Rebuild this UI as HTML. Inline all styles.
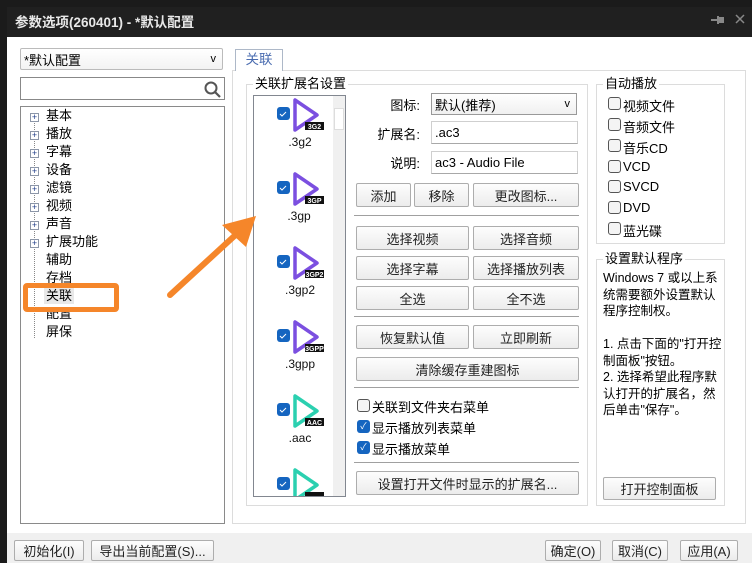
<!DOCTYPE html><html><head><meta charset="utf-8"><style>
*{box-sizing:border-box;margin:0;padding:0}
body{width:752px;height:563px;background:#1b1b1b;position:relative;overflow:hidden;font-family:"Liberation Sans","Noto Sans CJK SC",sans-serif;font-size:13px;color:#000}
.a{position:absolute}
.btn{position:absolute;background:linear-gradient(#fdfdfd,#ececec);border:1px solid #adadad;border-radius:2px;text-align:center;font-size:13px;color:#222;display:flex;align-items:center;justify-content:center}
.inp{position:absolute;background:#fff;border:1px solid #cfcfcf;border-bottom-color:#a8a8a8;padding-left:3px;display:flex;align-items:center}
.cb{position:absolute;width:13px;height:13px;border:1px solid #555;border-radius:3px;background:#f4f4f4}
.cbc{position:absolute;width:13px;height:13px;border-radius:3px;background:#1565c0;color:#fff;font-size:9px;line-height:13px;text-align:center}
.sep{position:absolute;height:1px;background:#a0a0a0;left:349px;width:230px}
.grp{position:absolute;border:1px solid #dcdcdc}
.gt{position:absolute;background:#fff;padding:0 2px;font-size:13px;line-height:15px}
.tr{position:absolute;left:46px;font-size:13px;line-height:16px}
.pl{position:absolute;left:30px;width:9px;height:9px;border:1px solid #8c96a8;background:#fff;font-size:9px;line-height:7px;text-align:center;color:#1f3c88}
</style></head><body>
<div class="a" style="left:7px;top:7px;width:745px;height:30px;background:#202020"></div>
<div class="a" style="left:15px;top:11px;color:#e8e8e8;font-weight:bold;font-size:13.5px">参数选项(260401) - *默认配置</div>
<svg class="a" style="left:711px;top:15px" width="14" height="10"><rect x="0" y="4" width="6" height="2" fill="#888"/><rect x="6" y="1" width="2" height="8" fill="#888"/><rect x="8" y="2" width="5" height="6" fill="#888"/></svg>
<svg class="a" style="left:735px;top:14px" width="10" height="10"><path d="M1 1L9 9M9 1L1 9" stroke="#888" stroke-width="1.5"/></svg>
<div class="a" style="left:7px;top:37px;width:745px;height:496px;background:#fff"></div>
<div class="a" style="left:7px;top:533px;width:745px;height:30px;background:#f0f0f0"></div>

<div class="inp" style="left:20px;top:48px;width:203px;height:22px;border-radius:2px;border-color:#bbb;background:linear-gradient(#fff,#f3f3f3)">*默认配置<span style="position:absolute;right:6px;font-size:11px">v</span></div>
<div class="inp" style="left:20px;top:77px;width:205px;height:23px;border-color:#888">
<svg class="a" style="right:3px;top:3px" width="17" height="17"><circle cx="7" cy="7" r="5.5" fill="none" stroke="#555" stroke-width="2"/><line x1="11" y1="11" x2="16" y2="16" stroke="#555" stroke-width="2.2"/></svg></div>
<div class="a" style="left:20px;top:106px;width:205px;height:418px;border:1px solid #8a8a8a;background:#fff"></div>
<div class="a" style="left:34px;top:118px;height:220px;border-left:1px dotted #888"></div>
<div class="pl" style="top:113px">+</div><div class="tr" style="top:108px">基本</div>
<div class="pl" style="top:131px">+</div><div class="tr" style="top:126px">播放</div>
<div class="pl" style="top:149px">+</div><div class="tr" style="top:144px">字幕</div>
<div class="pl" style="top:167px">+</div><div class="tr" style="top:162px">设备</div>
<div class="pl" style="top:185px">+</div><div class="tr" style="top:180px">滤镜</div>
<div class="pl" style="top:203px">+</div><div class="tr" style="top:198px">视频</div>
<div class="pl" style="top:221px">+</div><div class="tr" style="top:216px">声音</div>
<div class="pl" style="top:239px">+</div><div class="tr" style="top:234px">扩展功能</div>
<div class="tr" style="top:252px">辅助</div>
<div class="tr" style="top:270px">存档</div>
<div class="tr" style="top:288px;background:#e8e8e8;padding:0 2px;left:44px">关联</div>
<div class="tr" style="top:306px">配置</div>
<div class="tr" style="top:324px">屏保</div>

<div class="a" style="left:232px;top:70px;width:514px;height:454px;border:1px solid #dcdcdc"></div>
<div class="a" style="left:235px;top:49px;width:48px;height:22px;border:1px solid #adb8c8;border-bottom:none;background:#fff;color:#4a6cb0;text-align:center;line-height:20px;font-size:13.5px">关联</div>

<div class="grp" style="left:246px;top:84px;width:342px;height:422px"></div>
<div class="gt" style="left:253px;top:76px">关联扩展名设置</div>
<div class="a" style="left:253px;top:95px;width:93px;height:402px;border:1px solid #828790;background:#fff;overflow:hidden">
<div class="a" style="left:79px;top:0;width:13px;height:400px;background:#f0f0f0"></div>
<div class="a" style="left:80px;top:12px;width:10px;height:22px;background:#fff;border:1px solid #ddd"></div>
</div>
<svg class="a" style="left:253px;top:95px" width="80" height="401">
<g font-family="Liberation Sans" font-size="12" text-anchor="middle" fill="#111">
<g transform="translate(0,0)"><rect x="24" y="12" width="13" height="13" rx="3" fill="#1565c0"/><path d="M27 19l2 2 4-4" stroke="#fff" fill="none" stroke-width="1"/><path d="M42 5 L42 35 L64 20 Z" fill="none" stroke="#7b4fe0" stroke-width="3.5" stroke-linejoin="round"/><rect x="52" y="27" width="19" height="8" fill="#111"/><text x="61.5" y="34" font-size="7" fill="#fff" font-weight="bold">3G2</text><text x="47" y="51">.3g2</text></g>
<g transform="translate(0,74)"><rect x="24" y="12" width="13" height="13" rx="3" fill="#1565c0"/><path d="M27 19l2 2 4-4" stroke="#fff" fill="none" stroke-width="1"/><path d="M42 5 L42 35 L64 20 Z" fill="none" stroke="#7b4fe0" stroke-width="3.5" stroke-linejoin="round"/><rect x="52" y="27" width="19" height="8" fill="#111"/><text x="61.5" y="34" font-size="7" fill="#fff" font-weight="bold">3GP</text><text x="46" y="51">.3gp</text></g>
<g transform="translate(0,148)"><rect x="24" y="12" width="13" height="13" rx="3" fill="#1565c0"/><path d="M27 19l2 2 4-4" stroke="#fff" fill="none" stroke-width="1"/><path d="M42 5 L42 35 L64 20 Z" fill="none" stroke="#7b4fe0" stroke-width="3.5" stroke-linejoin="round"/><rect x="52" y="27" width="19" height="8" fill="#111"/><text x="61.5" y="34" font-size="7" fill="#fff" font-weight="bold">3GP2</text><text x="47" y="51">.3gp2</text></g>
<g transform="translate(0,222)"><rect x="24" y="12" width="13" height="13" rx="3" fill="#1565c0"/><path d="M27 19l2 2 4-4" stroke="#fff" fill="none" stroke-width="1"/><path d="M42 5 L42 35 L64 20 Z" fill="none" stroke="#7b4fe0" stroke-width="3.5" stroke-linejoin="round"/><rect x="52" y="27" width="19" height="8" fill="#111"/><text x="61.5" y="34" font-size="7" fill="#fff" font-weight="bold">3GPP</text><text x="47" y="51">.3gpp</text></g>
<g transform="translate(0,296)"><rect x="24" y="12" width="13" height="13" rx="3" fill="#1565c0"/><path d="M27 19l2 2 4-4" stroke="#fff" fill="none" stroke-width="1"/><path d="M42 5 L42 35 L64 20 Z" fill="none" stroke="#2bd0b0" stroke-width="3.5" stroke-linejoin="round"/><rect x="52" y="27" width="19" height="8" fill="#111"/><text x="61.5" y="34" font-size="7" fill="#fff" font-weight="bold">AAC</text><text x="47" y="51">.aac</text></g>
<g transform="translate(0,370)"><rect x="24" y="12" width="13" height="13" rx="3" fill="#1565c0"/><path d="M27 19l2 2 4-4" stroke="#fff" fill="none" stroke-width="1"/><path d="M42 5 L42 35 L64 20 Z" fill="none" stroke="#2bd0b0" stroke-width="3.5" stroke-linejoin="round"/><rect x="52" y="27" width="19" height="8" fill="#111"/></g>
</g></svg>

<div class="a" style="left:380px;top:95px;width:40px;text-align:right">图标:</div>
<div class="inp" style="left:431px;top:93px;width:146px;height:22px;border-color:#999;background:linear-gradient(#fff,#f0f0f0)">默认(推荐)<span style="position:absolute;right:6px;font-size:11px">v</span></div>
<div class="a" style="left:365px;top:124px;width:55px;text-align:right">扩展名:</div>
<div class="inp" style="left:431px;top:121px;width:147px;height:23px">.ac3</div>
<div class="a" style="left:380px;top:153px;width:40px;text-align:right">说明:</div>
<div class="inp" style="left:431px;top:151px;width:147px;height:23px">ac3 - Audio File</div>
<div class="btn" style="left:356px;top:183px;width:55px;height:24px">添加</div>
<div class="btn" style="left:414px;top:183px;width:55px;height:24px">移除</div>
<div class="btn" style="left:473px;top:183px;width:106px;height:24px">更改图标...</div>
<div class="sep" style="top:215px;left:354px;width:225px"></div>
<div class="btn" style="left:356px;top:226px;width:113px;height:24px">选择视频</div>
<div class="btn" style="left:473px;top:226px;width:106px;height:24px">选择音频</div>
<div class="btn" style="left:356px;top:256px;width:113px;height:24px">选择字幕</div>
<div class="btn" style="left:473px;top:256px;width:106px;height:24px">选择播放列表</div>
<div class="btn" style="left:356px;top:286px;width:113px;height:24px">全选</div>
<div class="btn" style="left:473px;top:286px;width:106px;height:24px">全不选</div>
<div class="sep" style="top:316px;left:354px;width:225px"></div>
<div class="btn" style="left:356px;top:325px;width:113px;height:24px">恢复默认值</div>
<div class="btn" style="left:473px;top:325px;width:106px;height:24px">立即刷新</div>
<div class="btn" style="left:356px;top:357px;width:223px;height:24px">清除缓存重建图标</div>
<div class="sep" style="top:387px;left:354px;width:225px"></div>
<div class="cb" style="left:357px;top:399px"></div><div class="a" style="left:372px;top:397px">关联到文件夹右菜单</div>
<div class="cbc" style="left:357px;top:420px">✓</div><div class="a" style="left:372px;top:418px">显示播放列表菜单</div>
<div class="cbc" style="left:357px;top:441px">✓</div><div class="a" style="left:372px;top:439px">显示播放菜单</div>
<div class="sep" style="top:462px;left:354px;width:225px"></div>
<div class="btn" style="left:356px;top:471px;width:223px;height:24px">设置打开文件时显示的扩展名...</div>

<div class="grp" style="left:596px;top:84px;width:129px;height:160px"></div>
<div class="gt" style="left:603px;top:76px">自动播放</div>
<div class="cb" style="left:608px;top:97px"></div><div class="a" style="left:623px;top:96px">视频文件</div>
<div class="cb" style="left:608px;top:118px"></div><div class="a" style="left:623px;top:117px">音频文件</div>
<div class="cb" style="left:608px;top:139px"></div><div class="a" style="left:623px;top:138px">音乐CD</div>
<div class="cb" style="left:608px;top:160px"></div><div class="a" style="left:623px;top:159px">VCD</div>
<div class="cb" style="left:608px;top:180px"></div><div class="a" style="left:623px;top:179px">SVCD</div>
<div class="cb" style="left:608px;top:201px"></div><div class="a" style="left:623px;top:200px">DVD</div>
<div class="cb" style="left:608px;top:222px"></div><div class="a" style="left:623px;top:221px">蓝光碟</div>
<div class="grp" style="left:596px;top:259px;width:129px;height:247px"></div>
<div class="gt" style="left:603px;top:251px">设置默认程序</div>
<div class="a" style="left:603px;top:270px;width:120px;line-height:16.5px;font-size:12.5px">Windows 7 或以上系统需要额外设置默认程序控制权。<br><br>1. 点击下面的"打开控制面板"按钮。<br>2. 选择希望此程序默认打开的扩展名，然后单击"保存"。</div>
<div class="btn" style="left:603px;top:477px;width:113px;height:23px">打开控制面板</div>

<div class="btn" style="left:14px;top:540px;width:70px;height:21px">初始化(I)</div>
<div class="btn" style="left:91px;top:540px;width:123px;height:21px">导出当前配置(S)...</div>
<div class="btn" style="left:545px;top:540px;width:56px;height:21px">确定(O)</div>
<div class="btn" style="left:612px;top:540px;width:56px;height:21px">取消(C)</div>
<div class="btn" style="left:680px;top:540px;width:58px;height:21px">应用(A)</div>

<div class="a" style="left:23px;top:283px;width:96px;height:29px;border:5px solid #f5862a;border-radius:4px"></div>
<svg class="a" style="left:160px;top:205px" width="110" height="100"><line x1="10" y1="90" x2="82" y2="24" stroke="#f5862a" stroke-width="6" stroke-linecap="round"/><path d="M96 11 L62 20 L86 42 Z" fill="#f5862a"/></svg>
</body></html>
